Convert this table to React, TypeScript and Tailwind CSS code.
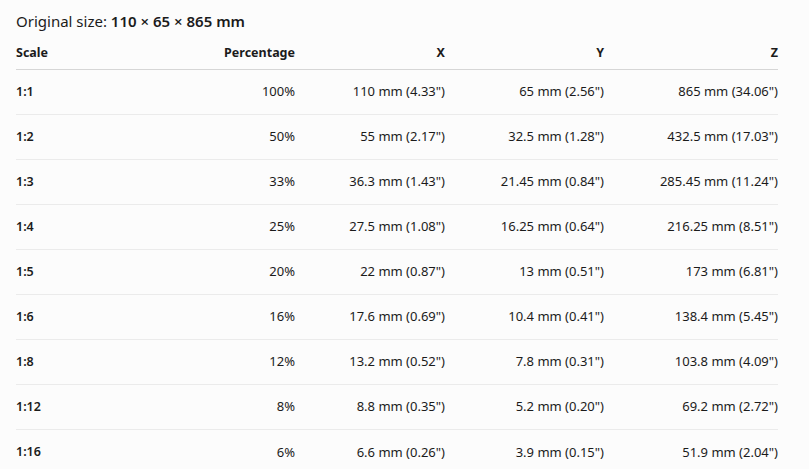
const rows = [
  ["1:1", "100%", "110 mm (4.33\")", "65 mm (2.56\")", "865 mm (34.06\")"],
  ["1:2", "50%", "55 mm (2.17\")", "32.5 mm (1.28\")", "432.5 mm (17.03\")"],
  ["1:3", "33%", "36.3 mm (1.43\")", "21.45 mm (0.84\")", "285.45 mm (11.24\")"],
  ["1:4", "25%", "27.5 mm (1.08\")", "16.25 mm (0.64\")", "216.25 mm (8.51\")"],
  ["1:5", "20%", "22 mm (0.87\")", "13 mm (0.51\")", "173 mm (6.81\")"],
  ["1:6", "16%", "17.6 mm (0.69\")", "10.4 mm (0.41\")", "138.4 mm (5.45\")"],
  ["1:8", "12%", "13.2 mm (0.52\")", "7.8 mm (0.31\")", "103.8 mm (4.09\")"],
  ["1:12", "8%", "8.8 mm (0.35\")", "5.2 mm (0.20\")", "69.2 mm (2.72\")"],
  ["1:16", "6%", "6.6 mm (0.26\")", "3.9 mm (0.15\")", "51.9 mm (2.04\")"],
]

export default function App() {
  return (
    <div className="min-h-[469px] bg-[#fcfcfc] px-4 pt-[9px] text-[#1b1b1b] font-['Noto_Sans',sans-serif]">
      <h2 className="text-[15px] leading-6">
        Original size: <span className="font-semibold">110 × 65 × 865 mm</span>
      </h2>
      <table className="mt-[4px] w-[762px] table-fixed border-collapse text-[13px]">
        <colgroup>
          <col className="w-[180px]" />
          <col className="w-[99px]" />
          <col className="w-[150px]" />
          <col className="w-[159px]" />
          <col className="w-[174px]" />
        </colgroup>
        <thead>
          <tr className="h-[32px] border-b border-[#d6d6d6] text-[12.5px] font-semibold">
            <th className="pt-[1px] text-left">Scale</th>
            <th className="pt-[1px] text-right">Percentage</th>
            <th className="pt-[1px] text-right">X</th>
            <th className="pt-[1px] text-right">Y</th>
            <th className="pt-[1px] text-right">Z</th>
          </tr>
        </thead>
        <tbody>
          {rows.map((r, i) => (
            <tr key={r[0]} className={i < rows.length - 1 ? "h-[45px] border-b border-[#ebebeb]" : "h-[45px]"}>
              <td className="pt-[1px] text-left text-[12.5px] font-semibold">{r[0]}</td>
              <td className="pt-[1px] text-right">{r[1]}</td>
              <td className="pt-[1px] text-right">{r[2]}</td>
              <td className="pt-[1px] text-right">{r[3]}</td>
              <td className="pt-[1px] text-right">{r[4]}</td>
            </tr>
          ))}
        </tbody>
      </table>
    </div>
  )
}
